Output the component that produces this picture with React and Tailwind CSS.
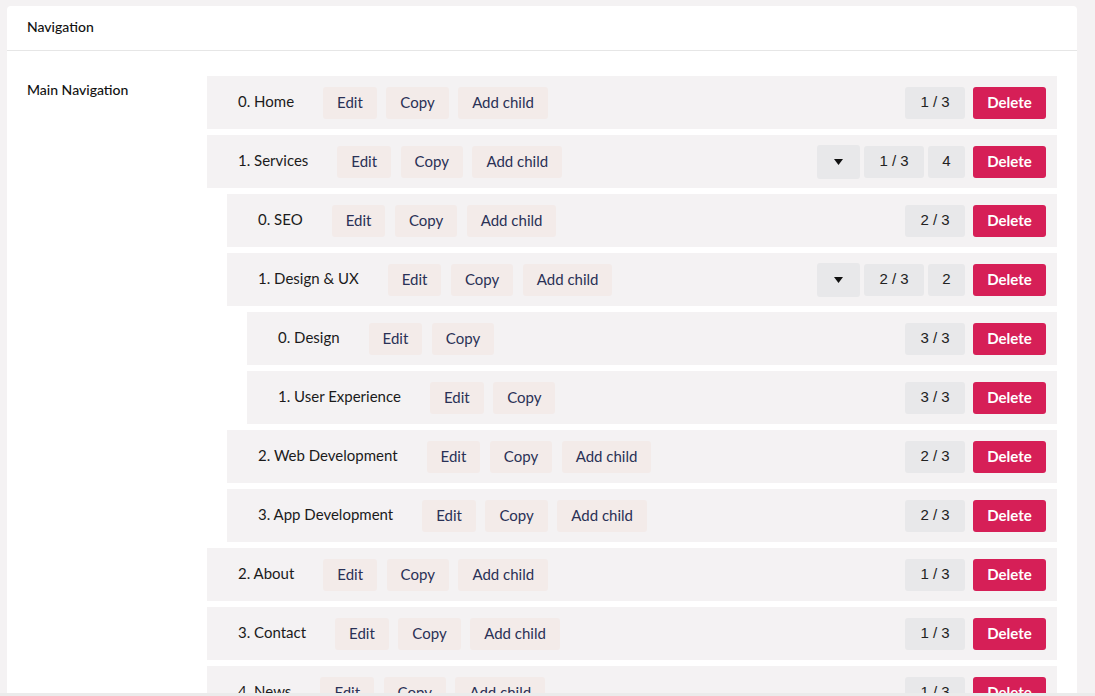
import React from 'react';

const tree = [
  { label: '0. Home', pos: '1 / 3', add: true },
  {
    label: '1. Services', pos: '1 / 3', add: true, count: 4,
    children: [
      { label: '0. SEO', pos: '2 / 3', add: true },
      {
        label: '1. Design & UX', pos: '2 / 3', add: true, count: 2,
        children: [
          { label: '0. Design', pos: '3 / 3' },
          { label: '1. User Experience', pos: '3 / 3' },
        ],
      },
      { label: '2. Web Development', pos: '2 / 3', add: true },
      { label: '3. App Development', pos: '2 / 3', add: true },
    ],
  },
  { label: '2. About', pos: '1 / 3', add: true },
  { label: '3. Contact', pos: '1 / 3', add: true },
  { label: '4. News', pos: '1 / 3', add: true },
];

const ActionButton = ({ children }) => (
  <button className="h-8 px-3.5 pb-px rounded-[3px] bg-[#f3ebe9] text-[15px] text-[#2a3156]">
    {children}
  </button>
);

const Counter = ({ children, className = '' }) => (
  <div
    className={`h-8 flex items-center justify-center rounded-[3px] bg-[#e8e8ea] text-[15px] text-[#222] font-['Liberation_Sans',Arial,sans-serif] ${className}`}
  >
    {children}
  </div>
);

const NavRow = ({ item }) => (
  <>
    <div className="h-[53px] flex items-center bg-[#f4f2f3] pl-[31px] pr-[11px]">
      <span className="mr-[29px] pb-0.5 text-[15px] text-[#1b1b1b]">{item.label}</span>
      <div className="flex gap-[9.5px]">
        <ActionButton>Edit</ActionButton>
        <ActionButton>Copy</ActionButton>
        {item.add && <ActionButton>Add child</ActionButton>}
      </div>
      <div className="ml-auto flex items-center gap-2">
        <div className="flex items-center gap-1">
          {item.children && (
            <button className="h-[34px] w-[43px] flex items-center justify-center rounded-[3px] bg-[#e8e8ea]">
              <svg width="9" height="6" viewBox="0 0 9 6">
                <path d="M0 0h9L4.5 6z" fill="#111" />
              </svg>
            </button>
          )}
          <Counter className="w-[60px]">{item.pos}</Counter>
          {item.count && <Counter className="w-[37px]">{item.count}</Counter>}
        </div>
        <button className="h-8 w-[73px] pb-px rounded-[3px] bg-[#d61f57] text-[15px] font-bold text-white">
          Delete
        </button>
      </div>
    </div>
    {item.children && (
      <div className="pl-5 flex flex-col gap-1.5">
        {item.children.map(child => (
          <NavRow key={child.label} item={child} />
        ))}
      </div>
    )}
  </>
);

export default function App() {
  return (
    <div className="h-[696px] overflow-hidden bg-[#f4f2f3] pt-1.5 pl-[7px] pr-[18px] font-['Lato',sans-serif] relative">
      <div className="bg-white rounded-t-[4px] min-h-full">
        <div className="h-[45px] flex items-center px-5 pb-1 border-b border-[#e6e6e6]">
          <h2 className="text-[14px] font-medium text-[#111]">Navigation</h2>
        </div>
        <div className="flex pt-[25px] pl-5 pr-5">
          <div className="w-[180px] shrink-0 pt-[3px] text-[14px] font-medium text-[#111]">
            Main Navigation
          </div>
          <div className="flex-1 flex flex-col gap-1.5">
            {tree.map(item => (
              <NavRow key={item.label} item={item} />
            ))}
          </div>
        </div>
      </div>
      <div className="absolute left-0 right-0 bottom-0 h-[3px] bg-[#ebebeb]" />
    </div>
  );
}
